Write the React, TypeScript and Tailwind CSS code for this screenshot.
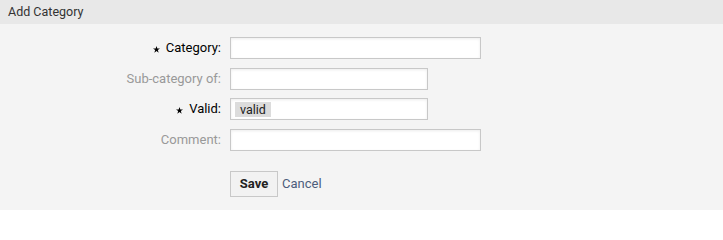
import React from "react";

const font = { fontFamily: "Roboto, 'Open Sans', sans-serif" };

function Star() {
  return (
    <svg viewBox="0 0 10 10" className="w-[7px] h-[7px] mr-[6px] mt-[3px]" fill="#000">
      <polygon points="5,0 6.2,3.6 10,3.6 6.9,5.8 8.1,9.5 5,7.2 1.9,9.5 3.1,5.8 0,3.6 3.8,3.6" />
    </svg>
  );
}

interface RowProps {
  label: string;
  required?: boolean;
  wide?: boolean;
  children?: React.ReactNode;
}

function Row({ label, required = false, wide = false, children }: RowProps) {
  return (
    <div className="flex items-center h-[22px]">
      <label
        className={`w-[230px] pr-[9px] flex justify-end items-center text-[13px] ${
          required ? "text-[#000]" : "text-[#999]"
        }`}
      >
        {required && <Star />}
        {label}
      </label>
      <div
        className={`${wide ? "w-[251px]" : "w-[198px]"} h-[22px] bg-white border border-[#c8c8c8] shadow-[inset_0_1px_3px_rgba(0,0,0,0.08)] flex items-center pl-[4px]`}
      >
        {children}
      </div>
    </div>
  );
}

export default function App() {
  return (
    <div className="w-[723px] h-[210px] bg-[#f4f4f4]" style={font}>
      <div className="h-[24px] bg-[#e8e8e8] flex items-center px-[8px] text-[12.5px] text-[#333]">
        Add Category
      </div>
      <div className="pt-[13px] flex flex-col gap-[8.5px]">
        <Row label="Category:" required wide />
        <Row label="Sub-category of:" />
        <Row label="Valid:" required>
          <span className="bg-[#dcdcdc] text-[#222] text-[12.5px] leading-[15px] px-[5px]">valid</span>
        </Row>
        <Row label="Comment:" wide />
      </div>
      <div className="flex items-center pl-[230px] mt-[20px] gap-[4px]">
        <button className="w-[48px] h-[26px] border border-[#c8c8c8] bg-[#f2f2f2] text-[13px] font-bold text-[#222]">
          Save
        </button>
        <a className="text-[13px] text-[#4c5d7c]">Cancel</a>
      </div>
    </div>
  );
}
